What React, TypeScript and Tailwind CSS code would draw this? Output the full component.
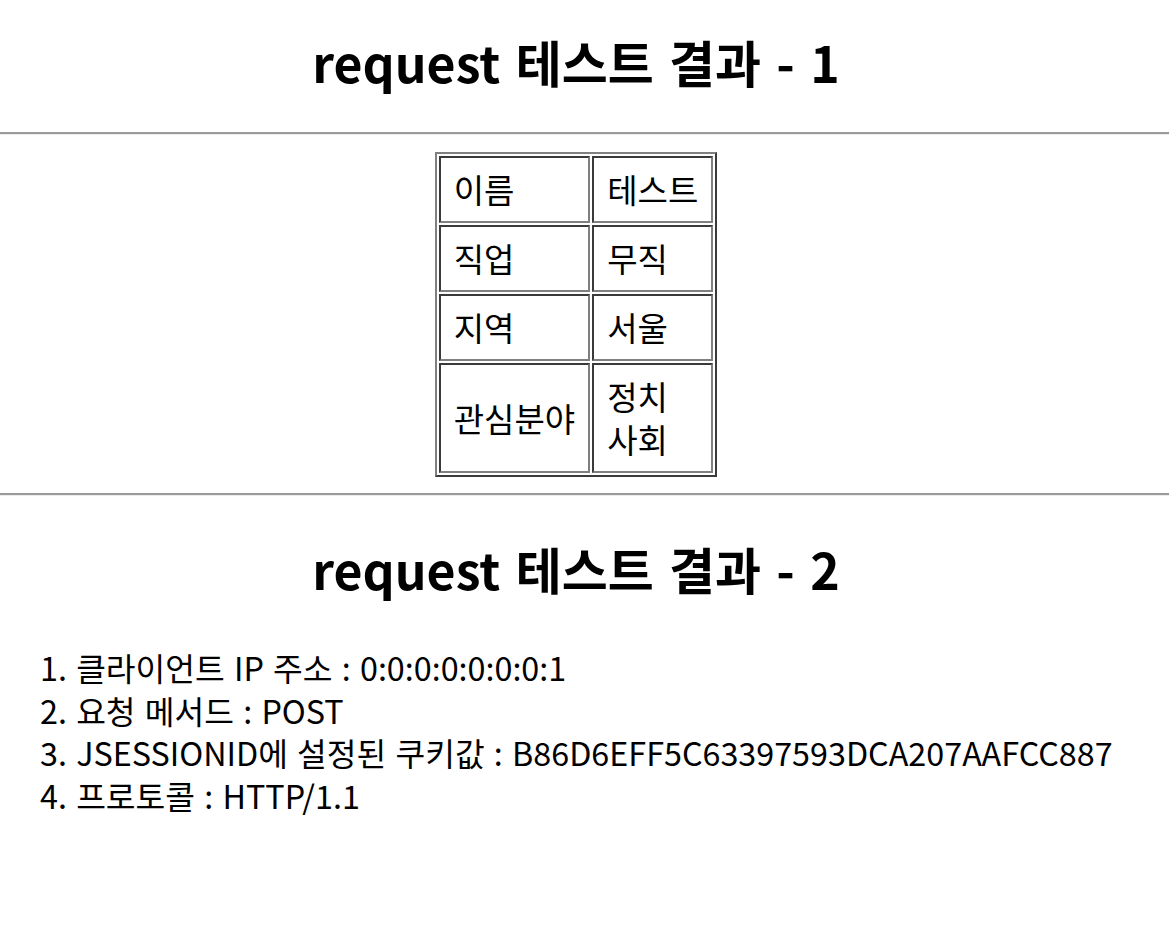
const font = { fontFamily: '"Noto Sans CJK KR", sans-serif' };

const rows: { label: string; value: string[] }[] = [
  { label: "이름", value: ["테스트"] },
  { label: "직업", value: ["무직"] },
  { label: "지역", value: ["서울"] },
  { label: "관심분야", value: ["정치", "사회"] },
];

const items = [
  "1. 클라이언트 IP 주소 : 0:0:0:0:0:0:0:1",
  "2. 요청 메서드 : POST",
  "3. JSESSIONID에 설정된 쿠키값 : B86D6EFF5C63397593DCA207AAFCC887",
  "4. 프로토콜 : HTTP/1.1",
];

function Hr() {
  return <div className="h-0 w-full border-t-2 border-b border-t-[#9a9a9a] border-b-[#ececec]" />;
}

export default function App() {
  return (
    <div className="min-h-[935px] w-full bg-white text-black" style={font}>
      <div className="w-[1152px]">
        <h1 className="pt-[29px] pb-[39px] text-center text-[50px] font-bold leading-[64px] [word-spacing:4px]">
          request 테스트 결과 - 1
        </h1>
      </div>
      <Hr />
      <div className="flex w-[1152px] justify-center pt-[17px] pb-[16px]">
        <table className="border-separate border-spacing-[2px] border-2 border-t-[#808080] border-l-[#808080] border-r-[#3a3a3a] border-b-[#3a3a3a] text-[33px] leading-[43px]">
          <tbody>
            {rows.map((r) => (
              <tr key={r.label}>
                <td className="border-2 border-t-[#3a3a3a] border-l-[#3a3a3a] border-r-[#808080] border-b-[#808080] px-[13px] py-[10px] align-middle">
                  {r.label}
                </td>
                <td className="border-2 border-t-[#3a3a3a] border-l-[#3a3a3a] border-r-[#808080] border-b-[#808080] px-[13px] py-[10px] align-middle">
                  {r.value.map((v) => (
                    <div key={v}>{v}</div>
                  ))}
                </td>
              </tr>
            ))}
          </tbody>
        </table>
      </div>
      <Hr />
      <div className="w-[1152px]">
        <h1 className="pt-[40px] text-center text-[50px] font-bold leading-[64px] [word-spacing:4px]">
          request 테스트 결과 - 2
        </h1>
      </div>
      <div className="whitespace-nowrap pl-[40px] pt-[46px] text-[32.3px] leading-[42.7px] [word-spacing:2px]">
        {items.map((t) => (
          <div key={t}>{t}</div>
        ))}
      </div>
    </div>
  );
}
